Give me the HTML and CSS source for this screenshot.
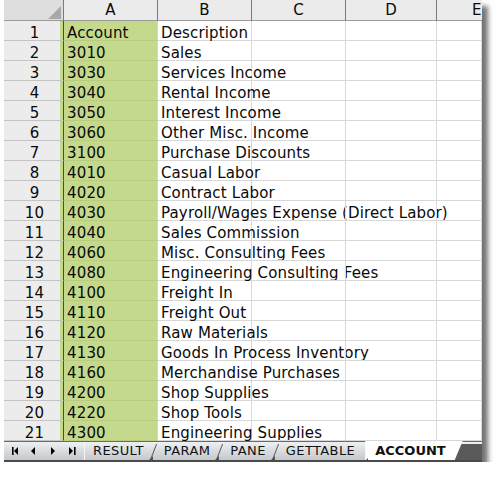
FILE: index.html
```html
<!DOCTYPE html>
<html>
<head>
<meta charset="utf-8">
<link rel="stylesheet" href="styles.css">
</head>
<body>
<div class="sheet">
  <div class="grid">
    <div class="corner"><svg class="tri" width="14" height="13" viewBox="0 0 14 13"><polygon points="13,0 13,13 0,13" fill="#a8a8a8"/></svg></div>
    <div class="ch">A</div><div class="ch">B</div><div class="ch">C</div><div class="ch">D</div><div class="ch e">E</div>

    <div class="rh">1</div><div class="a">Account</div><div class="c">Description</div><div class="c"></div><div class="c"></div><div class="c"></div>
    <div class="rh">2</div><div class="a">3010</div><div class="c">Sales</div><div class="c"></div><div class="c"></div><div class="c"></div>
    <div class="rh">3</div><div class="a">3030</div><div class="c">Services Income</div><div class="c"></div><div class="c"></div><div class="c"></div>
    <div class="rh">4</div><div class="a">3040</div><div class="c">Rental Income</div><div class="c"></div><div class="c"></div><div class="c"></div>
    <div class="rh">5</div><div class="a">3050</div><div class="c">Interest Income</div><div class="c"></div><div class="c"></div><div class="c"></div>
    <div class="rh">6</div><div class="a">3060</div><div class="c">Other Misc. Income</div><div class="c"></div><div class="c"></div><div class="c"></div>
    <div class="rh">7</div><div class="a">3100</div><div class="c">Purchase Discounts</div><div class="c"></div><div class="c"></div><div class="c"></div>
    <div class="rh">8</div><div class="a">4010</div><div class="c">Casual Labor</div><div class="c"></div><div class="c"></div><div class="c"></div>
    <div class="rh">9</div><div class="a">4020</div><div class="c">Contract Labor</div><div class="c"></div><div class="c"></div><div class="c"></div>
    <div class="rh">10</div><div class="a">4030</div><div class="c">Payroll/Wages Expense (Direct Labor)</div><div class="c"></div><div class="c"></div><div class="c"></div>
    <div class="rh">11</div><div class="a">4040</div><div class="c">Sales Commission</div><div class="c"></div><div class="c"></div><div class="c"></div>
    <div class="rh">12</div><div class="a">4060</div><div class="c">Misc. Consulting Fees</div><div class="c"></div><div class="c"></div><div class="c"></div>
    <div class="rh">13</div><div class="a">4080</div><div class="c">Engineering Consulting Fees</div><div class="c"></div><div class="c"></div><div class="c"></div>
    <div class="rh">14</div><div class="a">4100</div><div class="c">Freight In</div><div class="c"></div><div class="c"></div><div class="c"></div>
    <div class="rh">15</div><div class="a">4110</div><div class="c">Freight Out</div><div class="c"></div><div class="c"></div><div class="c"></div>
    <div class="rh">16</div><div class="a">4120</div><div class="c">Raw Materials</div><div class="c"></div><div class="c"></div><div class="c"></div>
    <div class="rh">17</div><div class="a">4130</div><div class="c">Goods In Process Inventory</div><div class="c"></div><div class="c"></div><div class="c"></div>
    <div class="rh">18</div><div class="a">4160</div><div class="c">Merchandise Purchases</div><div class="c"></div><div class="c"></div><div class="c"></div>
    <div class="rh">19</div><div class="a">4200</div><div class="c">Shop Supplies</div><div class="c"></div><div class="c"></div><div class="c"></div>
    <div class="rh">20</div><div class="a">4220</div><div class="c">Shop Tools</div><div class="c"></div><div class="c"></div><div class="c"></div>
    <div class="rh">21</div><div class="a">4300</div><div class="c">Engineering Supplies</div><div class="c"></div><div class="c"></div><div class="c"></div>
  </div>
  <div class="tabbar">
    <div class="nav">
      <svg width="81" height="18" viewBox="0 0 81 18">
        <rect x="8" y="5" width="1.6" height="8" fill="#000"/>
        <polygon points="14,5 14,13 10,9" fill="#000"/>
        <polygon points="31,5 31,13 27,9" fill="#000"/>
        <polygon points="47,5 47,13 51,9" fill="#000"/>
        <polygon points="65,5 65,13 69,9" fill="#000"/>
        <rect x="70" y="5" width="1.6" height="8" fill="#000"/>
      </svg>
    </div>
    <div class="tab first">RESULT</div>
    <div class="tab">PARAM</div>
    <div class="tab">PANE</div>
    <div class="tab">GETTABLE</div>
    <div class="tab active">ACCOUNT</div>
    <div class="fill"></div>
  </div>
</div>
</body>
</html>
```

FILE: styles.css
```css
body {
  margin: 0;
  background: #fff;
  font-family: "DejaVu Sans", Verdana, sans-serif;
  color: #0a0a0a;
}

.sheet {
  margin-left: 4px;
  width: 478px;
  overflow: hidden;
  box-shadow: 6px 6px 5px rgba(0, 0, 0, 0.55);
}

.grid {
  display: grid;
  grid-template-columns: 60px 94px 94px 94px 91px 45px;
  grid-template-rows: 21px repeat(21, 20px);
  font-size: 15px;
  letter-spacing: 0.15px;
  white-space: nowrap;
}

.grid > div {
  box-sizing: border-box;
  line-height: 16px;
}

.corner {
  background: #dedede;
  border-right: 1px solid #7a7a7a;
  border-bottom: 1px solid #9a9a9a;
  display: flex;
  justify-content: flex-end;
  align-items: flex-end;
  padding: 0 1px 1px 0;
}

.ch {
  background: #ebebeb;
  border-right: 1px solid #7a7a7a;
  border-bottom: 1px solid #9a9a9a;
  text-align: center;
  padding-top: 2px;
}

.ch.e {
  text-align: left;
  padding-left: 35px;
  border-right: none;
}

.rh {
  background: linear-gradient(to right, #ececec 56px, #c4d98c 56px);
  border-bottom: 1px solid #c4c4c4;
  border-right: 1px solid #4c4c3c;
  text-align: center;
  padding: 4px 0 0 2px;
}

.a {
  background: #c4d98c;
  border-bottom: 1px solid #b8cd80;
  border-right: 1px solid #d4d4d4;
  padding: 4px 0 0 3px;
}

.c {
  border-bottom: 1px solid #d8d8d8;
  border-right: 1px solid #d8d8d8;
  padding: 4px 0 0 3px;
}

.tabbar {
  display: flex;
  height: 18px;
  border-top: 1px solid #6a6a6a;
  border-bottom: 2px solid #4a4a4a;
  background: linear-gradient(to bottom, #eef0f2, #c4c8cc);
  font-size: 13px;
  letter-spacing: 0.4px;
  line-height: 18px;
  color: #111;
}

.nav {
  width: 81px;
  flex: none;
  border-right: 1px solid #f4f4f4;
  box-sizing: border-box;
}

.nav svg {
  display: block;
}

.tab {
  position: relative;
  padding: 0 10px;
  white-space: nowrap;
}

.tab.first {
  padding-left: 8px;
}

.tab::before {
  content: "";
  position: absolute;
  left: -1px;
  top: 2px;
  bottom: 0;
  width: 1px;
  background: #555;
  transform: skewX(-21deg);
}

.tab.first::before,
.tab.active::before {
  display: none;
}

.tab::after {
  content: "";
  position: absolute;
  left: -5px;
  bottom: 0;
  width: 0;
  height: 0;
  border-left: 4px solid transparent;
  border-bottom: 4px solid #555;
}

.tab.first::after {
  display: none;
}

.tab.active {
  z-index: 1;
  background: #fff;
  font-weight: bold;
  letter-spacing: 0;
  padding: 0 17px 0 10px;
  margin-top: -1px;
  margin-bottom: -2px;
  line-height: 19px;
  height: 21px;
  clip-path: polygon(0 0, 100% 0, calc(100% - 8px) 19px, 0 19px);
}

.tab.active::after {
  left: -1px;
}

.fill {
  flex: 1;
  margin-left: -9px;
  margin-top: 2px;
  background: #5a5a5a;
}
```
